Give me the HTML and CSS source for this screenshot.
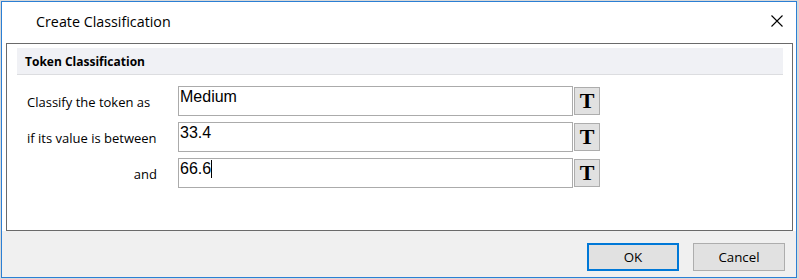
FILE: index.html
```html
<!DOCTYPE html>
<html>
<head>
<meta charset="utf-8">
<link rel="stylesheet" href="styles.css">
</head>
<body>
<div class="dialog">
  <div class="titlebar">
    <span class="title">Create Classification</span>
    <span class="close">
      <svg width="12" height="12" viewBox="0 0 12 12"><path d="M0.5 0.5 L11.5 11.5 M11.5 0.5 L0.5 11.5" stroke="#000" stroke-width="1.1" fill="none"/></svg>
    </span>
  </div>
  <div class="main">
    <div class="panel">
      <div class="band"><span class="band-title">Token Classification</span></div>
      <div class="form">
        <div class="label">Classify the token as</div>
        <div class="input">Medium</div>
        <div class="tbtn">T</div>
        <div class="label">if its value is between</div>
        <div class="input">33.4</div>
        <div class="tbtn">T</div>
        <div class="label right">and</div>
        <div class="input">66.6<span class="caret"></span></div>
        <div class="tbtn">T</div>
      </div>
    </div>
  </div>
  <div class="footer">
    <div class="btn ok">OK</div>
    <div class="btn">Cancel</div>
  </div>
</div>
</body>
</html>
```

FILE: styles.css
```css
html, body {
  margin: 0;
  padding: 0;
}
body {
  background: #d9d9d9;
  padding: 1px 2px 1px 1px;
  width: 796px;
  height: 277px;
  font-family: "Open Sans", "Noto Sans", sans-serif;
}
.dialog {
  width: 794px;
  height: 275px;
  border: 1px solid #2b7fd4;
  background: #ffffff;
  display: flex;
  flex-direction: column;
}
.titlebar {
  height: 41px;
  display: flex;
  align-items: center;
  justify-content: space-between;
  padding-left: 34px;
  padding-right: 13px;
}
.title {
  font-size: 14.3px;
  color: #000;
  margin-top: -2px;
}
.close {
  display: flex;
  margin-top: -4px;
}
.main {
  padding: 0 3px 0 4px;
}
.panel {
  height: 182px;
  border: 1px solid #6a6a6a;
  padding: 4px 9px 0 10px;
}
.band {
  height: 26px;
  background: #f0f1f5;
  border-bottom: 1px solid #dcdde0;
  display: flex;
  align-items: center;
  padding-left: 8px;
}
.band-title {
  font-weight: 700;
  font-size: 12px;
  color: #000;
  margin-top: 1px;
}
.form {
  display: grid;
  grid-template-columns: 150px 395px 26px;
  column-gap: 1px;
  row-gap: 6px;
  margin-top: 11px;
  padding-left: 10px;
}
.label {
  font-size: 13px;
  color: #000;
  padding-top: 8px;
  line-height: 17px;
}
.label.right {
  text-align: right;
  padding-right: 20px;
}
.input {
  border: 1px solid #ababab;
  font-family: "Liberation Sans", Arial, sans-serif;
  font-size: 16px;
  line-height: 18px;
  padding: 1px 0 0 1px;
  box-sizing: border-box;
  height: 30px;
  color: #000;
  display: flex;
  align-items: flex-start;
}
.caret {
  display: inline-block;
  width: 1px;
  height: 18px;
  background: #000;
}
.tbtn {
  margin-top: 1px;
  height: 28px;
  box-sizing: border-box;
  border: 1px solid #adadad;
  background: #e1e1e1;
  font-family: "Liberation Serif", "Times New Roman", serif;
  font-weight: 700;
  font-size: 22px;
  display: flex;
  align-items: center;
  justify-content: center;
  color: #000;
}
.footer {
  flex: 1;
  background: #f0f0f0;
  display: flex;
  justify-content: flex-end;
  align-items: flex-start;
  padding-top: 12px;
  padding-right: 11px;
  gap: 14px;
}
.btn {
  width: 92px;
  height: 28px;
  box-sizing: border-box;
  border: 1px solid #adadad;
  background: #e1e1e1;
  font-size: 13.3px;
  display: flex;
  align-items: center;
  justify-content: center;
  color: #000;
}
.btn.ok {
  border: 2px solid #0078d7;
}
```
